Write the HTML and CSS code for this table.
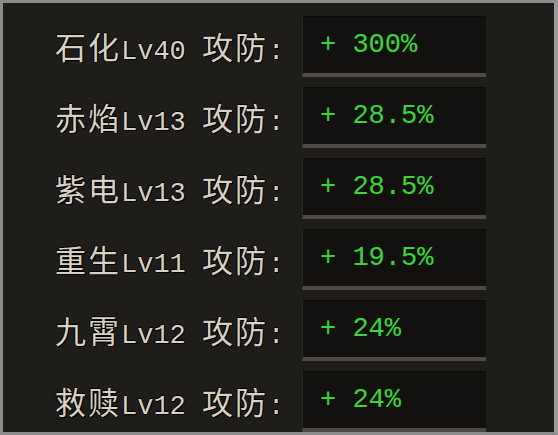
FILE: index.html
```html
<!DOCTYPE html>
<html lang="zh">
<head>
<meta charset="utf-8">
<link rel="stylesheet" href="styles.css">
</head>
<body>
<div class="panel">
  <div class="row"><div class="label"><span class="cn">石化</span><span class="en">Lv40 </span><span class="cn">攻防</span><span class="en">:</span></div><div class="box"><span class="val">+ 300%</span></div></div>
  <div class="row"><div class="label"><span class="cn">赤焰</span><span class="en">Lv13 </span><span class="cn">攻防</span><span class="en">:</span></div><div class="box"><span class="val">+ 28.5%</span></div></div>
  <div class="row"><div class="label"><span class="cn">紫电</span><span class="en">Lv13 </span><span class="cn">攻防</span><span class="en">:</span></div><div class="box"><span class="val">+ 28.5%</span></div></div>
  <div class="row"><div class="label"><span class="cn">重生</span><span class="en">Lv11 </span><span class="cn">攻防</span><span class="en">:</span></div><div class="box"><span class="val">+ 19.5%</span></div></div>
  <div class="row"><div class="label"><span class="cn">九霄</span><span class="en">Lv12 </span><span class="cn">攻防</span><span class="en">:</span></div><div class="box"><span class="val">+ 24%</span></div></div>
  <div class="row"><div class="label"><span class="cn">救赎</span><span class="en">Lv12 </span><span class="cn">攻防</span><span class="en">:</span></div><div class="box"><span class="val">+ 24%</span></div></div>
</div>
</body>
</html>
```
FILE: styles.css
```css
html, body {
  margin: 0;
  padding: 0;
  background: #1f1d1a;
}
.panel {
  width: 558px;
  height: 435px;
  box-sizing: border-box;
  border-style: solid;
  border-width: 3px 4px 3px 3px;
  border-color: #8e8e8e #9a9a9a #8a8a8a #8a8a8a;
  background: #1f1d1a;
  padding: 13px 0 0 52px;
  display: flex;
  flex-direction: column;
  gap: 10px;
}
.row {
  display: flex;
  align-items: center;
  height: 61px;
}
.label {
  width: 247px;
  color: #d8d0c2;
  white-space: pre;
  text-shadow: 1px 1px 0 #000, -1px 0 0 #000, 0 -1px 0 #000;
  line-height: 1;
  padding-top: 2px;
}
.cn {
  font-family: "Noto Sans CJK SC", sans-serif;
  font-size: 31px;
  letter-spacing: 2px;
}
.en {
  font-family: "Liberation Mono", monospace;
  font-size: 27px;
}
.box {
  width: 184px;
  height: 61px;
  box-sizing: border-box;
  background: #13110f;
  border-left: 1px solid #2b2825;
  border-top: 1px solid #0b0a09;
  border-bottom: 4px solid #4e4a45;
  display: flex;
  align-items: center;
  padding: 0 0 0 17px;
}
.val {
  font-family: "Liberation Mono", monospace;
  font-size: 27px;
  color: #3fd23f;
  white-space: pre;
  text-shadow: 0 0 1px #0a3a0a;
}
```
